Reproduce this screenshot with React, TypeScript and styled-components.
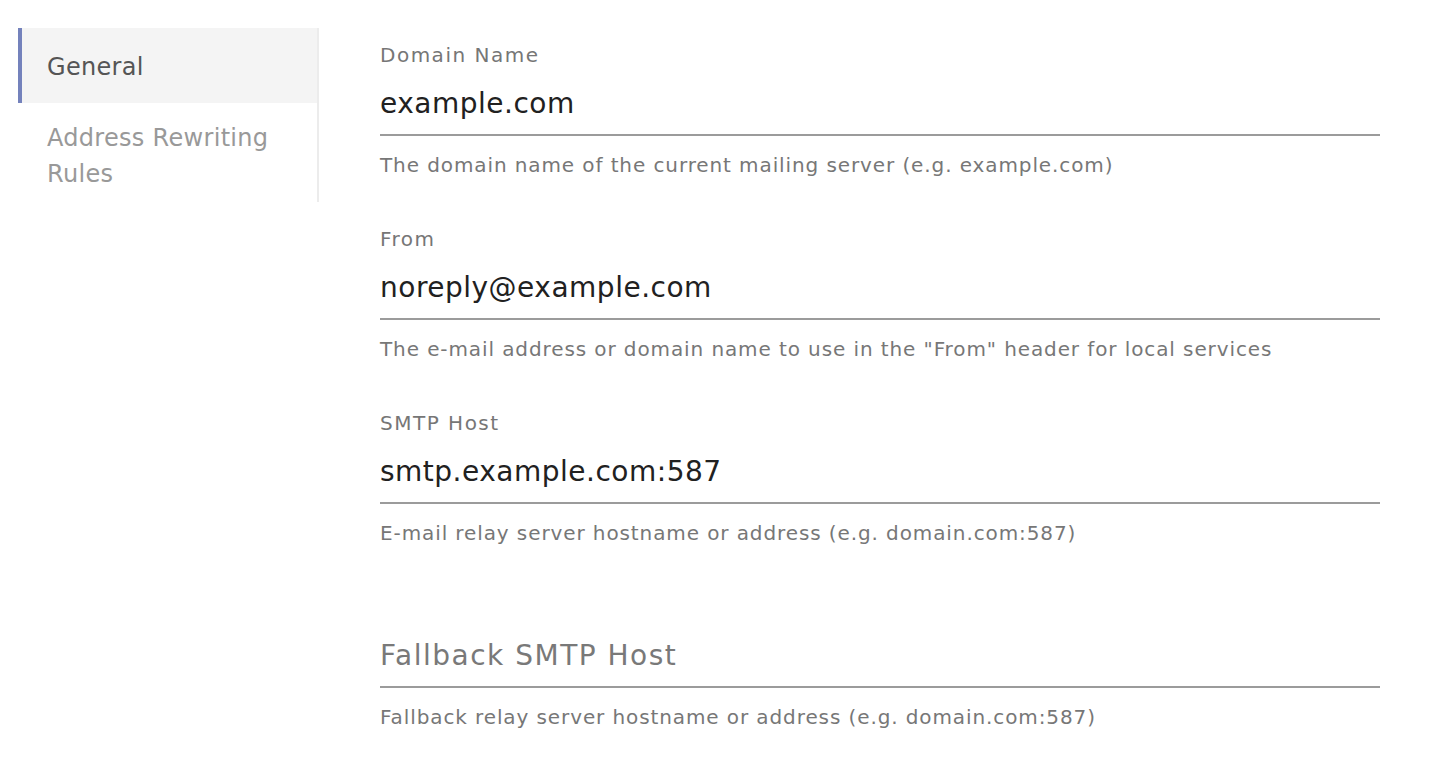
import React from "react";
import styled, { createGlobalStyle } from "styled-components";

const Global = createGlobalStyle`
  html, body { margin: 0; padding: 0; background: #ffffff; }
  body { font-family: "DejaVu Sans", "Open Sans", sans-serif; -webkit-font-smoothing: antialiased; }
  * { box-sizing: border-box; }
`;

const Page = styled.div`
  display: flex;
  align-items: flex-start;
  padding: 28px 0 0 18px;
  gap: 61px;
`;

const Sidebar = styled.nav`
  width: 301px;
  flex: none;
  display: flex;
  flex-direction: column;
  border-right: 2px solid #ececec;
  padding-bottom: 10px;
`;

const NavItem = styled.div<{ $active?: boolean }>`
  font-size: 24px;
  line-height: 36px;
  letter-spacing: 0.3px;
  padding: ${(p) => (p.$active ? "21px 24px 18px 25px" : "17px 24px 0 25px")};
  border-left: 4px solid ${(p) => (p.$active ? "#7482bc" : "transparent")};
  background: ${(p) => (p.$active ? "#f4f4f4" : "transparent")};
  color: ${(p) => (p.$active ? "#555555" : "#999999")};
`;

const Form = styled.div`
  width: 1000px;
  display: flex;
  flex-direction: column;
  padding-top: 15px;
`;

const Field = styled.div`
  display: flex;
  flex-direction: column;
  margin-bottom: 50px;
`;

const Label = styled.label`
  font-size: 20px;
  line-height: 24px;
  height: 24px;
  letter-spacing: 1.5px;
  color: #767676;
  margin-bottom: 16px;
`;

const Input = styled.input`
  border: none;
  outline: none;
  background: transparent;
  font-family: inherit;
  font-size: 28px;
  line-height: 40px;
  height: 53px;
  letter-spacing: 0.5px;
  padding: 0 0 11px 0;
  color: #212121;
  border-bottom: 2px solid #9b9b9b;
  &::placeholder { color: #797979; opacity: 1; letter-spacing: 1.5px; }
`;

const Helper = styled.div`
  font-size: 20px;
  line-height: 24px;
  letter-spacing: 0.9px;
  color: #777777;
  margin-top: 17px;
`;

const fields = [
  { label: "Domain Name", value: "example.com", help: "The domain name of the current mailing server (e.g. example.com)" },
  { label: "From", value: "noreply@example.com", help: 'The e-mail address or domain name to use in the "From" header for local services' },
  { label: "SMTP Host", value: "smtp.example.com:587", help: "E-mail relay server hostname or address (e.g. domain.com:587)" },
  { label: "", value: "", placeholder: "Fallback SMTP Host", help: "Fallback relay server hostname or address (e.g. domain.com:587)" },
];

export default function App() {
  return (
    <>
      <Global />
      <Page>
        <Sidebar>
          <NavItem $active>General</NavItem>
          <NavItem>Address Rewriting Rules</NavItem>
        </Sidebar>
        <Form>
          {fields.map((f, i) => (
            <Field key={i}>
              <Label>{f.label}</Label>
              <Input defaultValue={f.value} placeholder={f.placeholder} readOnly />
              <Helper>{f.help}</Helper>
            </Field>
          ))}
        </Form>
      </Page>
    </>
  );
}
